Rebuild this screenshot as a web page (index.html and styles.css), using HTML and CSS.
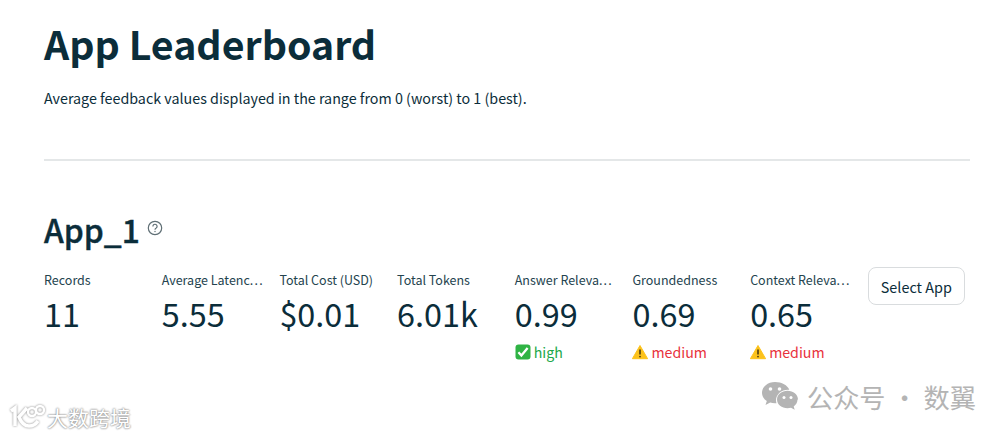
FILE: index.html
```html
<!DOCTYPE html>
<html lang="en">
<head>
    <meta charset="UTF-8">
    <title>App Leaderboard</title>
    <link rel="stylesheet" href="styles.css">
</head>
<body>
    <main class="page">
        <h1>App Leaderboard</h1>
        <p class="intro">Average feedback values displayed in the range from 0 (worst) to 1 (best).</p>
        <hr class="divider">

        <div class="app-title">
            <h2>App_1</h2>
            <svg class="help" viewBox="0 0 16 16" width="16" height="16" aria-hidden="true">
                <circle cx="8" cy="8" r="6.7" fill="none" stroke="#5f6f75" stroke-width="1.2"/>
                <path d="M5.9 6.4a2.1 2.1 0 1 1 3.3 1.7c-.8.5-1.2.9-1.2 1.6" fill="none" stroke="#5f6f75" stroke-width="1.2"/>
                <circle cx="8" cy="11.5" r=".7" fill="#5f6f75"/>
            </svg>
        </div>

        <div class="metrics">
            <div class="metric">
                <div class="metric-label">Records</div>
                <div class="metric-value">11</div>
            </div>
            <div class="metric">
                <div class="metric-label">Average Latenc<span class="dots">...</span></div>
                <div class="metric-value">5.55</div>
            </div>
            <div class="metric">
                <div class="metric-label">Total Cost (USD)</div>
                <div class="metric-value">$0.01</div>
            </div>
            <div class="metric">
                <div class="metric-label">Total Tokens</div>
                <div class="metric-value">6.01k</div>
            </div>
            <div class="metric">
                <div class="metric-label">Answer Releva<span class="dots">...</span></div>
                <div class="metric-value">0.99</div>
                <div class="metric-delta good">
                    <svg viewBox="0 0 16 16" width="16" height="16" aria-hidden="true">
                        <rect x=".5" y=".5" width="15" height="15" rx="3" fill="#2fb344"/>
                        <path d="M3.400 8.200l3 3.200 6.200-7.400" fill="none" stroke="#fff" stroke-width="2.300"/>
                    </svg>
                    high
                </div>
            </div>
            <div class="metric">
                <div class="metric-label">Groundedness</div>
                <div class="metric-value">0.69</div>
                <div class="metric-delta warn">
                    <svg viewBox="0 0 16 16" width="16" height="16" aria-hidden="true">
                        <path d="M8 1.500l7.600 13.200H.4z" fill="#fcc21b" stroke="#fcc21b" stroke-linejoin="round"/>
                        <path d="M8 5.600v5" stroke="#4a3a10" stroke-width="1.600"/>
                        <circle cx="8" cy="12.600" r=".9" fill="#4a3a10"/>
                    </svg>
                    medium
                </div>
            </div>
            <div class="metric">
                <div class="metric-label">Context Releva<span class="dots">...</span></div>
                <div class="metric-value">0.65</div>
                <div class="metric-delta warn">
                    <svg viewBox="0 0 16 16" width="16" height="16" aria-hidden="true">
                        <path d="M8 1.500l7.600 13.200H.4z" fill="#fcc21b" stroke="#fcc21b" stroke-linejoin="round"/>
                        <path d="M8 5.600v5" stroke="#4a3a10" stroke-width="1.600"/>
                        <circle cx="8" cy="12.600" r=".9" fill="#4a3a10"/>
                    </svg>
                    medium
                </div>
            </div>
            <button class="select-btn">Select App</button>
        </div>
    </main>

    <!-- watermarks on top of the screenshot -->
    <div class="mark-left">
        <svg viewBox="0 0 38 26" width="38" height="26" aria-hidden="true">
            <g fill="none" stroke="#fff" stroke-width="3.500">
                <path d="M3 7l4-3v18"/>
                <path d="M19 4l-8 9c2 5 5 9 10 9 4 0 7-2 9-5"/>
            </g>
            <g fill="none" stroke="#fff" stroke-width="2.400">
                <circle cx="24" cy="8" r="4"/>
                <circle cx="32" cy="6" r="4"/>
            </g>
        </svg>
        <span>大数跨境</span>
    </div>
    <div class="mark-right">
        <svg viewBox="0 0 38 32" width="38" height="32" aria-hidden="true">
            <path d="M14 1C6.800 1 1 5.800 1 11.800c0 3.400 1.900 6.300 4.800 8.300L4.500 24l4.700-2.400c1.500.4 3 .7 4.800.7.500 0 1 0 1.500-.1-.3-1-.5-2-.5-3 0-5.800 5.300-10.500 12-10.500h1.300C26.600 4.300 20.800 1 14 1z" fill="#b4b4b4"/>
            <path d="M37 18.500c0-4.900-4.800-8.800-10.500-8.800S16 13.600 16 18.500s4.800 8.800 10.500 8.800c1.200 0 2.400-.2 3.500-.5l3.700 2-1-3.300c2.300-1.700 3.800-4.200 3.800-7z" fill="#b4b4b4"/>
            <circle cx="9.500" cy="8" r="1.800" fill="#fff"/>
            <circle cx="18.500" cy="8" r="1.800" fill="#fff"/>
            <circle cx="23" cy="16.500" r="1.500" fill="#fff"/>
            <circle cx="30" cy="16.500" r="1.500" fill="#fff"/>
        </svg>
        <span>公众号 · 数翼</span>
    </div>
</body>
</html>
```

FILE: styles.css
```css
body {
    margin: 0;
    background-color: #ffffff;
    color: #0b2d3a;
    font-family: "Noto Sans CJK SC", "Noto Sans", sans-serif;
    overflow: hidden;
}

.page {
    padding: 18px 38px 0 44px;
}

h1 {
    margin: 0;
    font-size: 39.3px;
    font-weight: 700;
    line-height: 50px;
}

.intro {
    margin: 18px 0 0;
    font-size: 14.3px;
    line-height: 24px;
}

.divider {
    margin: 49px 0 0;
    border: none;
    height: 2px;
    background-color: #e4e7e8;
}

.app-title {
    display: flex;
    align-items: center;
    gap: 7px;
    margin-top: 45px;
}

h2 {
    margin: 0;
    font-size: 31.8px;
    font-weight: 500;
    line-height: 46px;
    -webkit-text-stroke: 0.4px #0b2d3a;
}

.help {
    margin-top: -2px;
}

.metrics {
    display: flex;
    align-items: flex-start;
    margin-top: 17px;
}

.metric {
    width: 117.7px;
    flex-shrink: 0;
}

.metric-label {
    font-size: 12.5px;
    line-height: 22px;
    white-space: nowrap;
    color: #24434e;
}

.dots {
    letter-spacing: 1.2px;
}

.metric-value {
    margin-top: 1px;
    font-size: 32.4px;
    line-height: 42px;
}

.metric-delta {
    display: flex;
    align-items: center;
    gap: 3px;
    font-size: 14.2px;
    line-height: 24px;
    margin-top: 6px;
}

.good {
    color: #21a849;
}

.warn {
    color: #e8313c;
}

.select-btn {
    margin: -2px 0 0 0;
    width: 97px;
    height: 38px;
    padding: 0;
    background-color: #ffffff;
    border: 1px solid #d9dcde;
    border-radius: 8px;
    color: #0b2d3a;
    font-family: inherit;
    font-size: 14.4px;
}

.mark-left {
    position: absolute;
    left: 8px;
    top: 402px;
    display: flex;
    align-items: center;
    gap: 1px;
    color: #ffffff;
    font-size: 21px;
    text-shadow: 0 0 2px #8a8a8a, 0 0 2px #8a8a8a;
}

.mark-left svg {
    filter: drop-shadow(0 0 1px #888);
}

.mark-right {
    position: absolute;
    left: 761px;
    top: 381px;
    display: flex;
    align-items: center;
    gap: 8px;
    color: #b4b4b4;
    font-size: 26.2px;
    line-height: 32px;
}
```
